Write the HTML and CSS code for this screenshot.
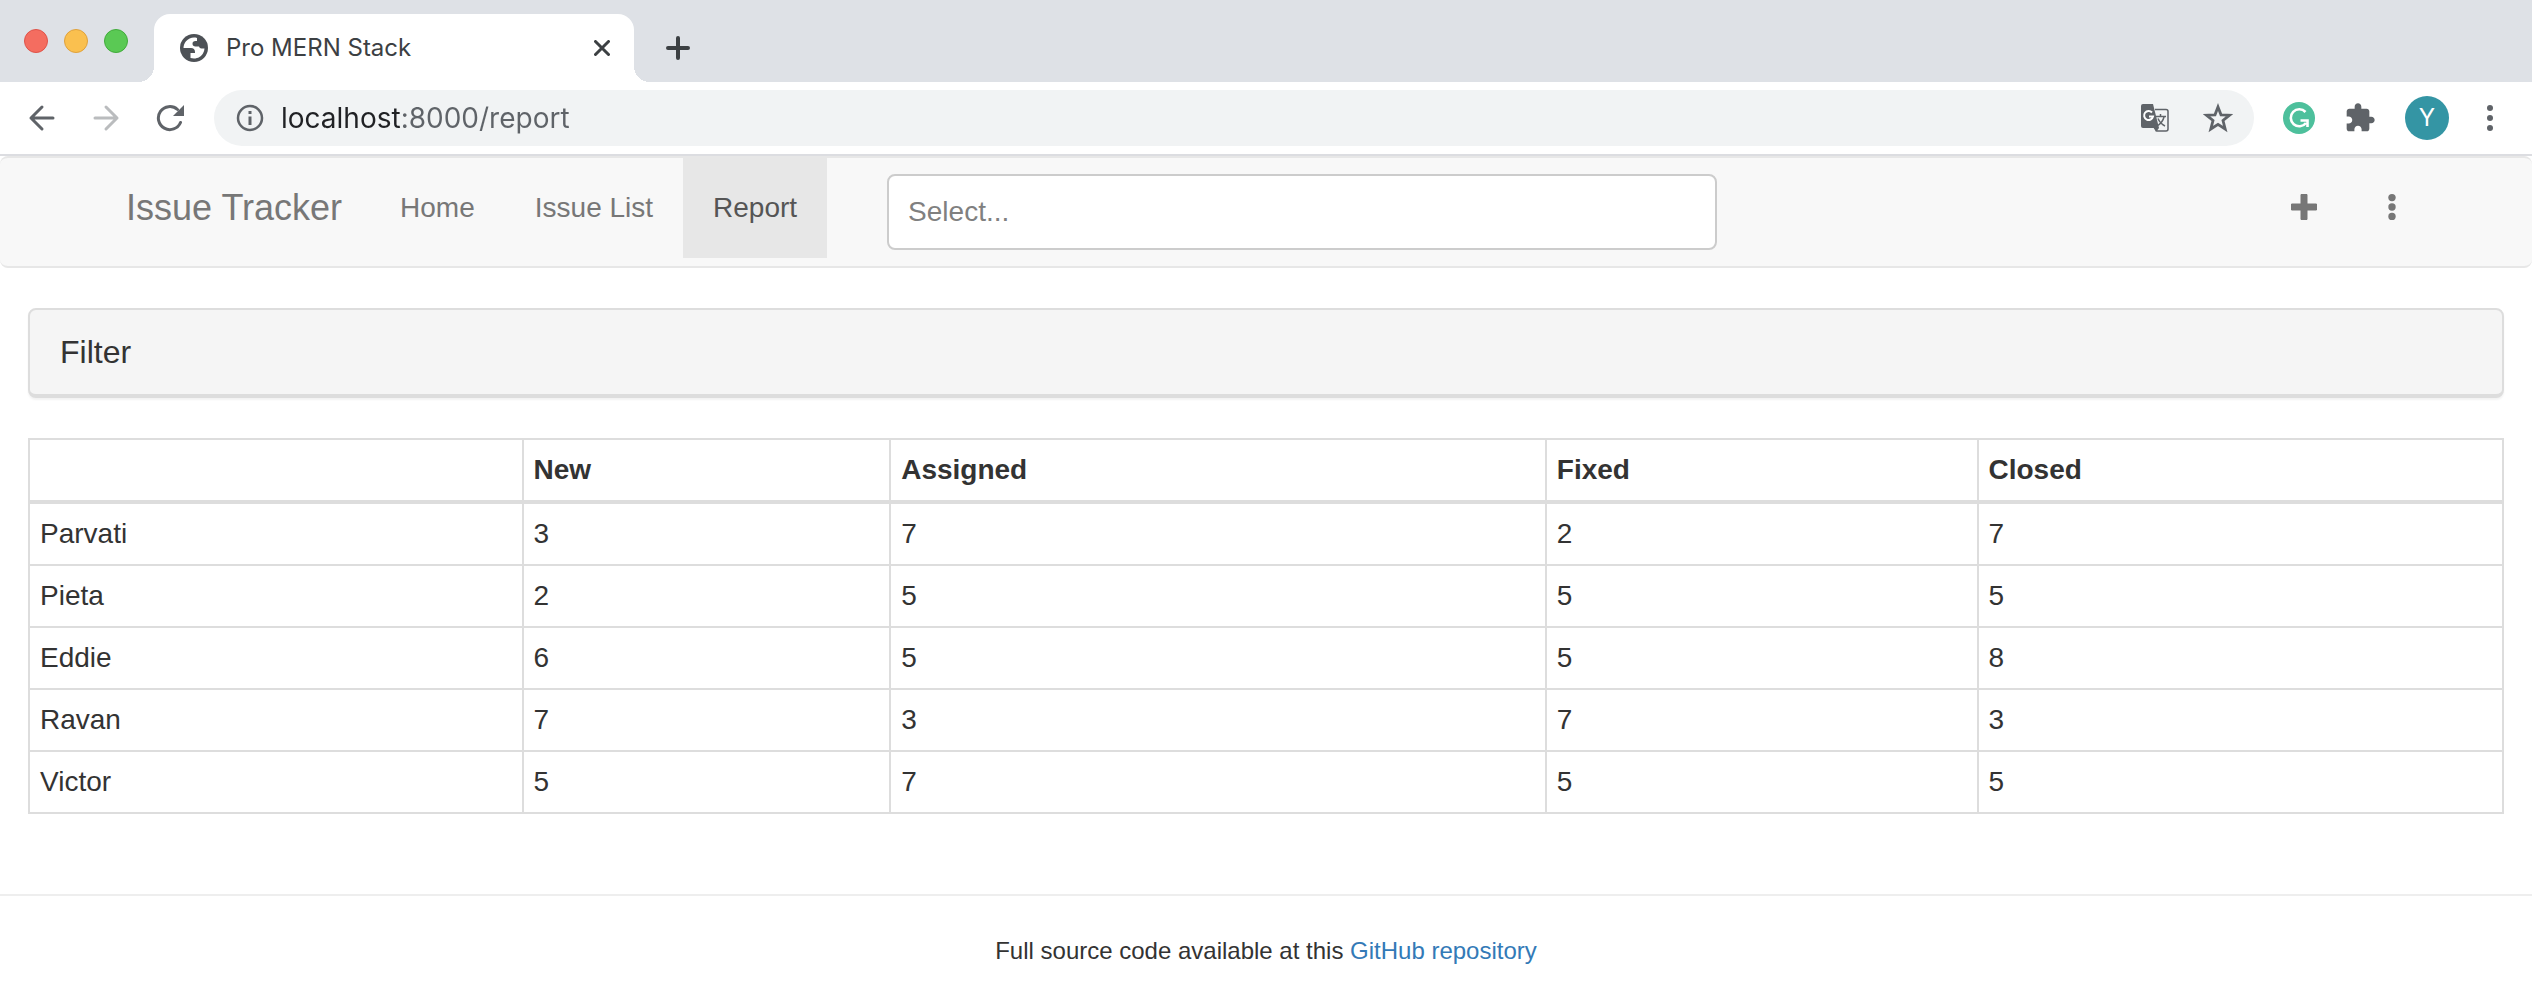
FILE: index.html
```html
<!DOCTYPE html>
<html lang="en">
<head>
<meta charset="utf-8">
<title>Pro MERN Stack</title>
<link rel="stylesheet" href="styles.css">
</head>
<body>
<header class="browser">
  <div class="tab-strip">
    <div class="lights">
      <button class="light light-close" aria-label="Close window"></button>
      <button class="light light-min" aria-label="Minimize window"></button>
      <button class="light light-max" aria-label="Zoom window"></button>
    </div>
    <div class="tab">
      <svg class="globe" viewBox="0 0 28 28" aria-hidden="true"><circle cx="14" cy="14" r="14" fill="#4d5156"/><path d="M14 3.500C11 3.500 8 5 6 7.200C4.400 9 3.500 11.500 3.500 14H11C13.500 14 15 15.500 15 18V19H10.500V24C11.600 24.300 12.800 24.500 14 24.500C18 24.500 21.500 22.300 23.200 19C24 17.500 24.400 16 24.500 14.500H21.500C20 14.500 19.500 13.500 19 12.500H15.500C13.800 12.500 12.500 11.500 12.500 9.800C12.500 8 13.500 7 15.500 7H17V4C16 3.600 15 3.500 14 3.500Z" fill="#fff"/></svg>
      <span class="tab-title">Pro MERN Stack</span>
      <button class="icon-btn tab-close" aria-label="Close tab"><svg width="16" height="16" viewBox="0 0 16 16"><path d="M1.500 1.500L14.500 14.500M14.500 1.500L1.500 14.500" stroke="#3c4043" stroke-width="3" stroke-linecap="round"/></svg></button>
    </div>
    <button class="icon-btn new-tab" aria-label="New tab"><svg width="24" height="24" viewBox="0 0 24 24"><path d="M12 2V22M2 12H22" stroke="#3c4043" stroke-width="4" stroke-linecap="round"/></svg></button>
  </div>
  <div class="toolbar">
    <div class="history">
      <button class="icon-btn" aria-label="Back"><svg width="28" height="28" viewBox="0 0 28 28"><path d="M25 14H3M14 3L3 14L14 25" fill="none" stroke="#5f6368" stroke-width="3" stroke-linecap="round" stroke-linejoin="round"/></svg></button>
      <button class="icon-btn" aria-label="Forward"><svg width="28" height="28" viewBox="0 0 28 28"><path d="M3 14H25M14 3L25 14L14 25" fill="none" stroke="#babcbe" stroke-width="3" stroke-linecap="round" stroke-linejoin="round"/></svg></button>
      <button class="icon-btn" aria-label="Reload"><svg width="28" height="28" viewBox="0 0 28 28"><path d="M24.500 18.500A11.500 11.500 0 1 1 21.500 5.500" fill="none" stroke="#5f6368" stroke-width="3" stroke-linecap="round"/><path d="M28 1V12H17Z" fill="#5f6368"/></svg></button>
    </div>
    <div class="omnibox">
      <svg width="28" height="28" viewBox="0 0 28 28" aria-hidden="true"><circle cx="14" cy="14" r="12" fill="none" stroke="#5f6368" stroke-width="2.500"/><path d="M14 12.500V21" stroke="#5f6368" stroke-width="3"/><path d="M14 7V10" stroke="#5f6368" stroke-width="3"/></svg>
      <input class="url" type="text" value="localhost:8000/report" aria-label="Address">
      <button class="icon-btn" aria-label="Translate this page"><svg width="28" height="28" viewBox="0 0 28 28"><path d="M14 5.500H25A2 2 0 0 1 27 7.500V25A2 2 0 0 1 25 27H16L12 22" fill="none" stroke="#5f6368" stroke-width="1.500"/><path d="M2 0H12L18 24H2A2 2 0 0 1 0 22V2A2 2 0 0 1 2 0Z" fill="#5f6368"/><path d="M13 24H18L15 28Z" fill="#5f6368"/><path d="M11 8.500A4.500 4.500 0 1 0 12 12.500H8" fill="none" stroke="#fff" stroke-width="2"/><path d="M15 12.500H25M19.500 10V12.500M23 13C22 17 19 20 17 21.500M17 14.500C18.500 18 21 20.500 24 22" fill="none" stroke="#5f6368" stroke-width="1.500"/></svg></button>
      <button class="icon-btn" aria-label="Bookmark this page"><svg width="30" height="30" viewBox="0 0 30 30"><path d="M15 4L18 11.800L26.500 12.200L20 17.500L22.200 26L15 21.300L7.800 26L10 17.500L3.500 12.200L12 11.800Z" fill="none" stroke="#5f6368" stroke-width="2.800"/></svg></button>
    </div>
    <div class="extensions">
      <button class="icon-btn" aria-label="Grammarly"><svg width="32" height="32" viewBox="0 0 32 32"><circle cx="16" cy="16" r="16" fill="#4dc09c"/><path d="M22.500 10A8.500 8.500 0 1 0 23 21M17.500 18.500H24.500V25" fill="none" stroke="#fff" stroke-width="2.600"/></svg></button>
      <button class="icon-btn" aria-label="Extensions"><svg width="32" height="32" viewBox="0 0 24 24"><path d="M20.500 11H19V7c0-1.100-.9-2-2-2h-4V3.500C13 2.120 11.880 1 10.500 1S8 2.120 8 3.500V5H4c-1.100 0-1.990.9-1.990 2v3.800H3.500c1.490 0 2.700 1.210 2.700 2.700s-1.210 2.700-2.700 2.700H2V20c0 1.100.9 2 2 2h3.800v-1.500c0-1.490 1.210-2.700 2.700-2.700 1.490 0 2.700 1.210 2.700 2.700V22H17c1.100 0 2-.9 2-2v-4h1.500c1.380 0 2.500-1.120 2.500-2.500S21.880 11 20.500 11z" fill="#5f6368"/></svg></button>
      <button class="icon-btn avatar" aria-label="Profile">Y</button>
      <button class="icon-btn" aria-label="Browser menu"><svg width="24" height="28" viewBox="0 0 24 28"><g fill="#5f6368"><circle cx="12" cy="4" r="3"/><circle cx="12" cy="14" r="3"/><circle cx="12" cy="24" r="3"/></g></svg></button>
    </div>
  </div>
</header>

<nav class="navbar">
  <a class="brand" href="#">Issue Tracker</a>
  <a class="nav-link" href="#">Home</a>
  <a class="nav-link" href="#">Issue List</a>
  <a class="nav-link active" href="#">Report</a>
  <input class="search" type="text" placeholder="Select..." aria-label="Search issues">
  <div class="nav-right">
    <button class="nav-link" aria-label="Create issue"><svg width="28" height="28" viewBox="0 0 28 28"><path d="M11 1.500H17V11H26.500V17H17V26.500H11V17H1.500V11H11Z" fill="#777" stroke="#777" stroke-linejoin="round"/></svg></button>
    <button class="nav-link" aria-label="More"><svg width="28" height="28" viewBox="0 0 28 28"><g fill="#777"><circle cx="14" cy="4.600" r="3.700"/><circle cx="14" cy="14" r="3.700"/><circle cx="14" cy="23.400" r="3.700"/></g></svg></button>
  </div>
</nav>

<main class="content">
  <section class="panel">
    <button class="panel-heading">Filter</button>
  </section>
  <table class="report">
    <colgroup>
      <col class="col-owner">
      <col class="col-new">
      <col class="col-assigned">
      <col class="col-fixed">
      <col class="col-closed">
    </colgroup>
    <thead>
      <tr><th></th><th>New</th><th>Assigned</th><th>Fixed</th><th>Closed</th></tr>
    </thead>
    <tbody>
      <tr><td>Parvati</td><td>3</td><td>7</td><td>2</td><td>7</td></tr>
      <tr><td>Pieta</td><td>2</td><td>5</td><td>5</td><td>5</td></tr>
      <tr><td>Eddie</td><td>6</td><td>5</td><td>5</td><td>8</td></tr>
      <tr><td>Ravan</td><td>7</td><td>3</td><td>7</td><td>3</td></tr>
      <tr><td>Victor</td><td>5</td><td>7</td><td>5</td><td>5</td></tr>
    </tbody>
  </table>
</main>

<footer class="footer">Full source code available at this <a href="#">GitHub repository</a></footer>
</body>
</html>
```
FILE: styles.css
```css
* {
  box-sizing: border-box;
}

body {
  margin: 0;
  background: #fff;
  color: #333;
  font-family: "Liberation Sans", Arial, sans-serif;
  font-size: 28px;
  line-height: 40px;
}

button,
input {
  margin: 0;
  padding: 0;
  border: 0;
  background: none;
  color: inherit;
  font: inherit;
}

svg {
  display: block;
  flex: none;
}

a {
  color: #337ab7;
  text-decoration: none;
}

.icon-btn {
  display: flex;
  flex: none;
  align-items: center;
  justify-content: center;
}

/* Browser frame */
.browser {
  border-bottom: 2px solid #dcdde1;
  font-family: Inter, sans-serif;
}

.tab-strip {
  display: flex;
  align-items: flex-end;
  height: 82px;
  padding-left: 24px;
  background: #dee1e6;
}

.lights {
  display: flex;
  gap: 16px;
  width: 130px;
  padding-bottom: 29px;
}

.light {
  width: 24px;
  height: 24px;
  border: 1px solid;
  border-radius: 50%;
}

.light-close {
  background: #f46d60;
  border-color: #df5349;
}

.light-min {
  background: #fac04f;
  border-color: #dfa13c;
}

.light-max {
  background: #5ac954;
  border-color: #41ab3b;
}

.tab {
  position: relative;
  display: flex;
  align-items: center;
  width: 480px;
  height: 68px;
  padding: 0 24px 0 26px;
  border-radius: 16px 16px 0 0;
  background: #fff;
}

.tab::before,
.tab::after {
  content: "";
  position: absolute;
  bottom: 0;
  width: 16px;
  height: 16px;
}

.tab::before {
  right: 100%;
  background: radial-gradient(circle at 0 0, #dee1e6 16px, #fff 16px);
}

.tab::after {
  left: 100%;
  background: radial-gradient(circle at 100% 0, #dee1e6 16px, #fff 16px);
}

.globe {
  width: 28px;
  height: 28px;
}

.tab-title {
  margin-left: 18px;
  color: #3c4043;
  font-size: 24px;
}

.tab-close {
  margin-left: auto;
}

.new-tab {
  height: 68px;
  margin-left: 32px;
}

.toolbar {
  display: flex;
  align-items: center;
  height: 72px;
  padding: 0 30px 0 28px;
}

.history {
  display: flex;
  gap: 36px;
  margin-right: 30px;
}

.omnibox {
  display: flex;
  flex: 1;
  align-items: center;
  gap: 34px;
  height: 56px;
  padding: 0 21px 0 22px;
  border-radius: 28px;
  background: #f1f3f4;
}

/* Host name darker than the rest of the address */
.url {
  flex: 1;
  min-width: 0;
  margin-left: -17px;
  color: #202124;
  background: linear-gradient(to right, #202124 119px, #5f6368 119px);
  background-clip: text;
  -webkit-background-clip: text;
  -webkit-text-fill-color: transparent;
}

.extensions {
  display: flex;
  align-items: center;
  gap: 29px;
  margin-left: 29px;
}

.avatar {
  width: 44px;
  height: 44px;
  border-radius: 50%;
  background: #3495a4;
  color: #fff;
  font-size: 24px;
}

/* Application bar */
.navbar {
  display: flex;
  align-items: flex-start;
  padding: 0 96px;
  border: solid #e7e7e7;
  border-width: 2px 0;
  border-radius: 8px;
  background: #f8f8f8;
}

.brand,
.nav-link {
  padding: 30px;
  color: #777;
  white-space: nowrap;
}

.brand {
  padding-right: 28px;
  font-size: 36px;
}

.active {
  background: #e7e7e7;
  color: #555;
}

.search {
  flex: 0 1 830px;
  min-width: 0;
  height: 76px;
  margin: 16px 60px;
  padding: 0 19px;
  border: 2px solid #ccc;
  border-radius: 8px;
  background: #fff;
}

.search::placeholder {
  color: #808080;
}

.nav-right {
  display: flex;
  margin-left: auto;
}

.nav-right .nav-link {
  padding: 35px 30px;
}

/* Page content */
.content {
  padding: 40px 28px 80px;
}

.panel {
  margin-bottom: 40px;
  border: 2px solid #ddd;
  border-bottom-width: 4px;
  border-radius: 8px;
  background: #f5f5f5;
  box-shadow: 0 2px 2px rgba(0, 0, 0, 0.05);
}

.panel-heading {
  display: block;
  width: 100%;
  padding: 22px 30px;
  font-size: 32px;
  text-align: left;
}

.report {
  width: 100%;
  border-collapse: collapse;
  table-layout: fixed;
}

.col-owner {
  width: 19.95%;
}

.col-new {
  width: 14.86%;
}

.col-assigned {
  width: 26.5%;
}

.col-fixed {
  width: 17.45%;
}

.col-closed {
  width: 21.24%;
}

.report th,
.report td {
  height: 62px;
  padding: 10px;
  border: 2px solid #ddd;
  text-align: left;
}

.report thead th {
  border-bottom-width: 4px;
}

.footer {
  padding: 38px 28px;
  border-top: 2px solid #eee;
  font-size: 24px;
  line-height: 34px;
  text-align: center;
}
```
